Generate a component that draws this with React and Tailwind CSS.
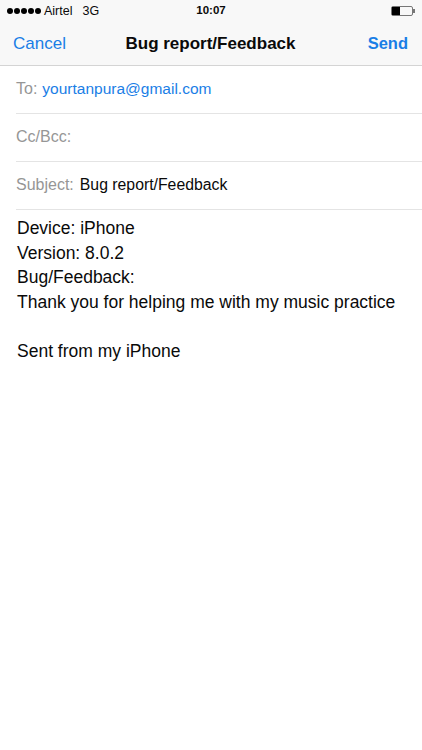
function Row({ label, children }) {
  return (
    <div className="h-[48px] ml-4 flex items-center border-b border-[#e4e4e4] pb-[2px]">
      <span className="text-[16px] text-[#969696]">{label}</span>
      {children}
    </div>
  );
}

export default function App() {
  return (
    <div className="w-[422px] h-[750px] bg-white text-[#0a0a0a] font-['Liberation_Sans',Arial,sans-serif] overflow-hidden">
      <header className="h-[66px] bg-[#f8f8f8] border-b border-[#d4d4d4]">
        <div className="h-[22px] relative flex items-center pl-[7px] text-[12.5px]">
          <div className="flex gap-[1px] mr-[3px]">
            <span className="w-[6px] h-[6px] rounded-full bg-black"></span>
            <span className="w-[6px] h-[6px] rounded-full bg-black"></span>
            <span className="w-[6px] h-[6px] rounded-full bg-black"></span>
            <span className="w-[6px] h-[6px] rounded-full bg-black"></span>
            <span className="w-[6px] h-[6px] rounded-full bg-black"></span>
          </div>
          <span>Airtel</span>
          <span className="ml-[10px]">3G</span>
          <span className="absolute left-0 right-0 text-center font-bold text-[11.5px]">10:07</span>
          <div className="absolute left-[391px] top-[6px] flex items-center">
            <div className="w-[22px] h-[10px] border border-[#777] rounded-[2px]">
              <div className="w-[8px] h-full bg-black"></div>
            </div>
            <div className="w-[1.5px] h-[4px] bg-[#777]"></div>
          </div>
        </div>
        <div className="h-[43px] grid grid-cols-[1fr_auto_1fr] items-center pl-[13px] pr-[14px]">
          <span className="text-[17px] text-[#1a7ee6]">Cancel</span>
          <span className="text-[17px] font-bold">Bug report/Feedback</span>
          <span className="text-[16.5px] font-bold text-[#1a7ee6] text-right">Send</span>
        </div>
      </header>
      <Row label="To:">
        <span className="ml-[5px] text-[15.5px] text-[#1a7ee6]">yourtanpura@gmail.com</span>
      </Row>
      <Row label="Cc/Bcc:" />
      <Row label="Subject:">
        <span className="ml-[6px] text-[15.8px]">Bug report/Feedback</span>
      </Row>
      <div className="pl-[17px] pt-[6px] text-[17.5px] leading-[24.5px]">
        <div>Device: iPhone</div>
        <div>Version: 8.0.2</div>
        <div>Bug/Feedback:</div>
        <div>Thank you for helping me with my music practice</div>
        <div className="h-[24.5px]"></div>
        <div>Sent from my iPhone</div>
      </div>
    </div>
  );
}
